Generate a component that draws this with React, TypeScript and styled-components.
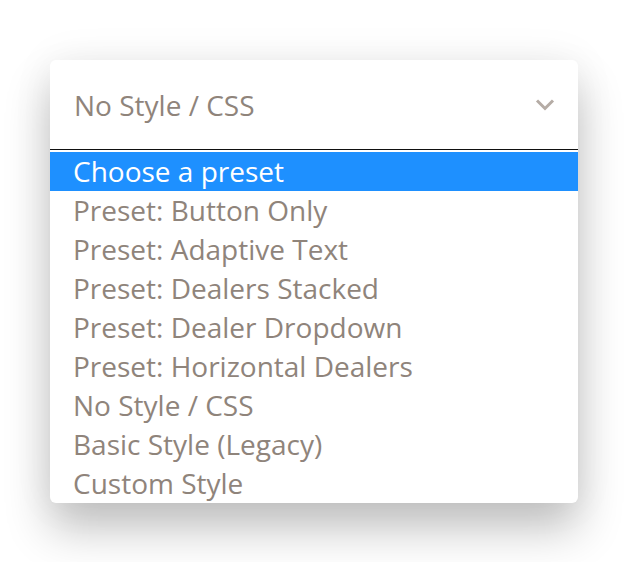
import React from "react";
import styled, { createGlobalStyle } from "styled-components";

const Global = createGlobalStyle`
  html, body { margin: 0; padding: 0; background: #ffffff; height: 100%; }
  body { font-family: "Open Sans", "Liberation Sans", sans-serif; }
  #root { min-height: 100%; }
`;

const Page = styled.div`
  box-sizing: border-box;
  min-height: 562px;
  padding: 60px 50px 0 50px;
  width: 628px;
`;

const Card = styled.div`
  width: 528px;
  background: #ffffff;
  border-radius: 6px;
  box-shadow: 0 26px 46px rgba(0, 0, 0, 0.24), 0 0 44px rgba(0, 0, 0, 0.06);
  overflow: hidden;
`;

const Header = styled.div`
  height: 90px;
  display: flex;
  align-items: center;
  justify-content: space-between;
  padding: 0 23px 0 24px;
  border-bottom: 1px solid #111111;
  box-sizing: border-box;
`;

const Value = styled.span`
  font-size: 28px;
  color: #8f847b;
`;

const List = styled.ul`
  list-style: none;
  margin: 0;
  padding: 2px 0 0 0;
`;

const Item = styled.li<{ $active?: boolean }>`
  height: 39px;
  line-height: 39px;
  padding: 0 23px;
  font-size: 28px;
  color: ${(p) => (p.$active ? "#ffffff" : "#8f847b")};
  background: ${(p) => (p.$active ? "#1e90ff" : "transparent")};
  white-space: nowrap;
`;

const Chevron = () => (
  <svg width="20" height="14" viewBox="0 0 20 14" fill="none">
    <path d="M2 2.5l8 8 8-8" stroke="#b5aca5" strokeWidth="3" />
  </svg>
);

const options = [
  "Choose a preset",
  "Preset: Button Only",
  "Preset: Adaptive Text",
  "Preset: Dealers Stacked",
  "Preset: Dealer Dropdown",
  "Preset: Horizontal Dealers",
  "No Style / CSS",
  "Basic Style (Legacy)",
  "Custom Style",
];

export default function App() {
  return (
    <>
      <Global />
      <Page>
        <Card>
          <Header>
            <Value>No Style / CSS</Value>
            <Chevron />
          </Header>
          <List>
            {options.map((o, i) => (
              <Item key={o} $active={i === 0}>
                {o}
              </Item>
            ))}
          </List>
        </Card>
      </Page>
    </>
  );
}
